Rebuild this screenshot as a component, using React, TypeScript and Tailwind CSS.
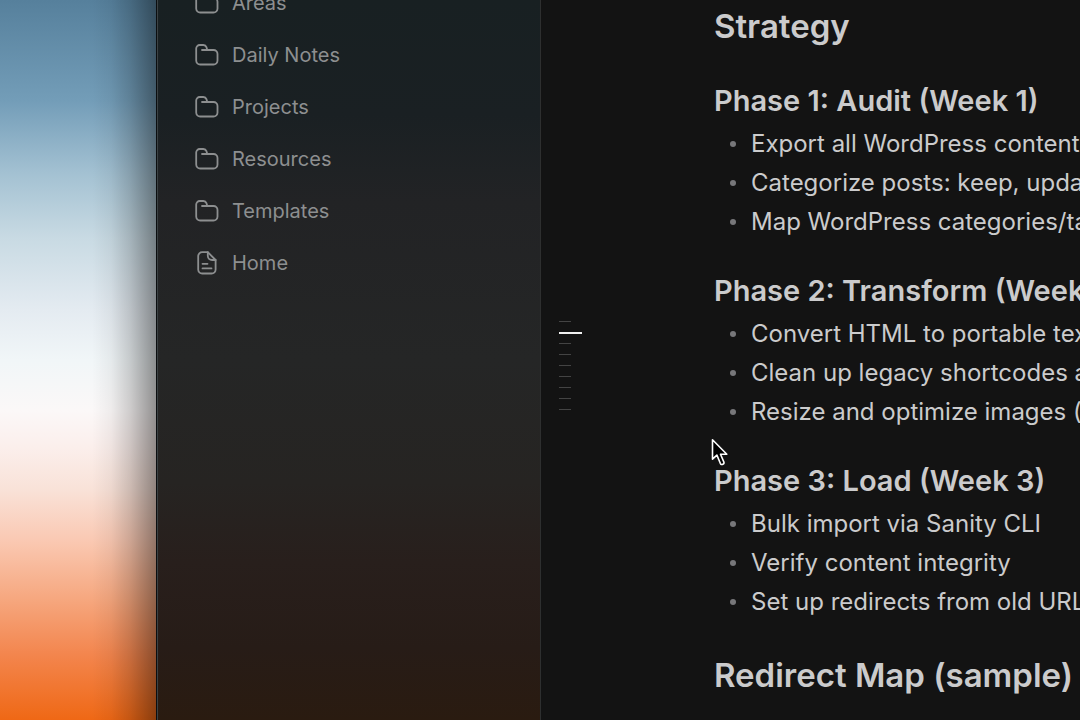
const folders = ["Areas", "Daily Notes", "Projects", "Resources", "Templates"];

const phases = [
  {
    title: "Phase 1: Audit (Week 1)",
    items: [
      "Export all WordPress content",
      "Categorize posts: keep, update",
      "Map WordPress categories/tags",
    ],
  },
  {
    title: "Phase 2: Transform (Week 2)",
    items: [
      "Convert HTML to portable text",
      "Clean up legacy shortcodes and",
      "Resize and optimize images (",
    ],
  },
  {
    title: "Phase 3: Load (Week 3)",
    items: [
      "Bulk import via Sanity CLI",
      "Verify content integrity",
      "Set up redirects from old URLs",
    ],
  },
];

const outline = [
  "Overview",
  "Strategy",
  "Phase 1",
  "Phase 2",
  "Phase 3",
  "Redirect Map",
  "Checklist",
  "Risks",
  "Notes",
];

const FolderIcon = () => (
  <svg
    viewBox="0 0 24 24"
    className="w-6 h-6 shrink-0"
    fill="none"
    stroke="currentColor"
    strokeWidth="1.8"
    strokeLinecap="round"
    strokeLinejoin="round"
    aria-hidden="true"
  >
    <path d="M7 7h11.500a4 4 0 0 1 4 4v6.500a4 4 0 0 1-4 4H5.200a4 4 0 0 1-4-4V5.500A3.500 3.500 0 0 1 4.700 2h3.700c1.700 0 2.500.7 3 2.100L12.300 7" />
  </svg>
);

const FileIcon = () => (
  <svg
    viewBox="0 0 24 24"
    className="w-6 h-6 shrink-0"
    fill="none"
    stroke="currentColor"
    strokeWidth="1.8"
    strokeLinecap="round"
    strokeLinejoin="round"
    aria-hidden="true"
  >
    <path d="M12.800 1.200H7.200a4 4 0 0 0-4 4v13.300a4 4 0 0 0 4 4h9.400a4 4 0 0 0 4-4V9z" />
    <path d="M12.800 1.200v3.600A4.200 4.200 0 0 0 17 9h3.600M7.500 12.800h5M7.500 17.400h9" />
  </svg>
);

const Sidebar = () => (
  <aside className="w-96 shrink-0 border-r border-[#2e2f2f] border-l border-l-[#3c4244] bg-[linear-gradient(to_bottom,#182022_0%,#1a2023_16%,#222325_28%,#252626_50%,#262422_67%,#281f1c_78%,#271c17_90%,#2a1b10_100%)]">
    <nav className="-mt-[23px]">
      <ul className="text-[#8d8f90] text-xl">
        {folders.map((name) => (
          <li key={name}>
            <a
              href="#"
              className="flex items-center gap-[13px] h-[52px] pl-[37px]"
            >
              <FolderIcon />
              <span>{name}</span>
            </a>
          </li>
        ))}
        <li>
          <a
            href="#"
            className="flex items-center gap-[13px] h-[52px] pl-[37px]"
          >
            <FileIcon />
            <span>Home</span>
          </a>
        </li>
      </ul>
    </nav>
  </aside>
);

const Outline = () => (
  <nav aria-label="Outline" className="w-[173px] shrink-0 pt-[316px] pl-[18px]">
    {outline.map((name) => (
      <a
        key={name}
        href="#"
        aria-label={name}
        className="flex items-center h-[11px]"
      >
        <span
          className={
            name === "Strategy"
              ? "w-[23px] h-0.5 bg-[#f0f0f0]"
              : "w-3 h-px bg-[#444444]"
          }
        />
      </a>
    ))}
  </nav>
);

const Cursor = () => (
  <svg
    viewBox="0 0 18 28"
    className="absolute left-[170px] top-[438px] w-[18px] h-7"
    aria-hidden="true"
  >
    <path
      d="M1.500 1.800v19.400l4.400-4.100 3.400 8.200c.5 1.100 1.500 1.500 2.500 1 1.100-.5 1.500-1.400 1-2.500L9.500 16.200h6.300z"
      fill="#000000"
      stroke="#ffffff"
      strokeWidth="1.600"
      strokeLinejoin="round"
    />
  </svg>
);

const App = () => {
  return (
    <div className="flex h-screen overflow-hidden bg-[#131313] font-['Inter','Liberation_Sans',sans-serif]">
      <div className="flex justify-end w-[157px] shrink-0 border-r border-[#0b0e10] bg-[linear-gradient(to_bottom,#56809c_0%,#739db8_14%,#a3c1d2_24%,#c8dae3_33%,#e4ebf1_43%,#f1f6f8_50%,#fbf8f8_57%,#fbefec_62%,#f9e2d8_68%,#fac9b3_75%,#f6a880_83%,#f3854d_91%,#ef6815_100%)]">
        <div className="w-16 bg-[linear-gradient(to_right,transparent_0%,rgba(0,0,0,0.05)_30%,rgba(0,0,0,0.18)_60%,rgba(0,0,0,0.42)_100%)]" />
      </div>
      <Sidebar />
      <main className="relative flex flex-1 min-w-0 overflow-hidden">
        <Outline />
        <article className="flex-1 min-w-0 pt-0.5 text-[#cbcbcc] whitespace-nowrap">
          <h2 className="text-[33px] leading-[48px] font-semibold">Strategy</h2>
          <div className="mt-[31px]">
            {phases.map((phase) => (
              <section key={phase.title} className="mb-[30px]">
                <h3 className="text-[29px] leading-10 font-semibold">
                  {phase.title}
                </h3>
                <ul className="mt-[3px] pl-4 text-2xl leading-[39px]">
                  {phase.items.map((item) => (
                    <li key={item} className="flex items-center gap-[15px]">
                      <span className="size-1.5 shrink-0 rounded-full bg-[#77777a]" />
                      <span>{item}</span>
                    </li>
                  ))}
                </ul>
              </section>
            ))}
          </div>
          <h2 className="text-[33px] leading-[48px] font-semibold">
            Redirect Map (sample)
          </h2>
        </article>
        <Cursor />
      </main>
    </div>
  );
};

export default App;
